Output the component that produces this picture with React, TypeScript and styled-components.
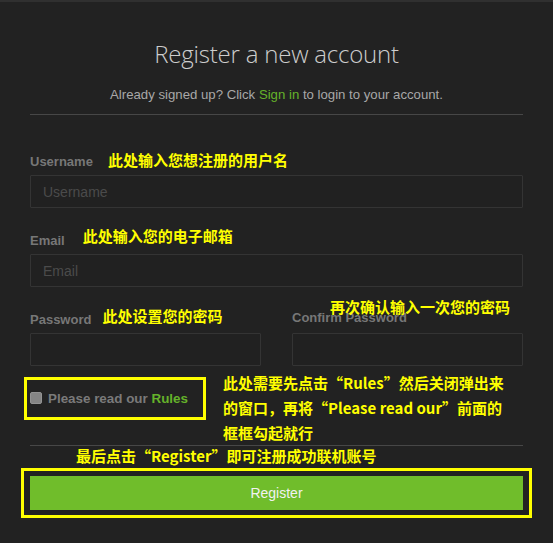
import React from "react";
import styled, { createGlobalStyle } from "styled-components";

const GlobalStyle = createGlobalStyle`
  html, body {
    margin: 0;
    padding: 0;
    background: #222;
  }
`;

export default function App() {
  return (
    <>
      <GlobalStyle />
      <Page>
        <Title>Register a new account</Title>
        <SubTitle>
          Already signed up? Click <GreenLink>Sign in</GreenLink> to login to
          your account.
        </SubTitle>
        <Divider />

        <Field>
          <LabelRow>
            <Label>Username</Label>
            <Note $indent={15}>此处输入您想注册的用户名</Note>
          </LabelRow>
          <Input placeholder="Username" />
        </Field>

        <Field>
          <LabelRow>
            <Label>Email</Label>
            <Note $indent={18} $lift={3}>此处输入您的电子邮箱</Note>
          </LabelRow>
          <Input placeholder="Email" />
        </Field>

        <PasswordGrid>
          <Field>
            <LabelRow>
              <Label>Password</Label>
              <Note $indent={11} $lift={2}>此处设置您的密码</Note>
            </LabelRow>
            <Input type="password" />
          </Field>
          <Field>
            <LabelRow>
              <Label>Confirm Password</Label>
              <FloatingNote>再次确认输入一次您的密码</FloatingNote>
            </LabelRow>
            <Input type="password" />
          </Field>
        </PasswordGrid>

        <RulesRow>
          <RulesBox>
            <FakeCheck />
            <RulesText>
              Please read our <GreenLink>Rules</GreenLink>
            </RulesText>
          </RulesBox>
          <SideNote>
            此处需要先点击“Rules”然后关闭弹出来
            <br />
            的窗口，再将“Please read our”前面的
            <br />
            框框勾起就行
          </SideNote>
        </RulesRow>

        <Divider $flat />
        <FinalNote>最后点击“Register”即可注册成功联机账号</FinalNote>

        <ButtonFrame>
          <RegisterButton>Register</RegisterButton>
        </ButtonFrame>
      </Page>
    </>
  );
}

const Page = styled.div`
  width: 553px;
  height: 543px;
  box-sizing: border-box;
  padding: 0 30px;
  background: #222;
  border-top: 2px solid #303030;
  font-family: "Liberation Sans", Arial, sans-serif;
  overflow: hidden;
`;

const Title = styled.h1`
  margin: 35px 0 0;
  font-family: "Open Sans", sans-serif;
  font-weight: 300;
  font-size: 24px;
  letter-spacing: -0.2px;
  line-height: 33px;
  color: #cdcdcd;
  text-align: center;
`;

const SubTitle = styled.p`
  margin: 17px 0 0;
  font-size: 13.2px;
  line-height: 16px;
  color: #a8a8a8;
  text-align: center;
`;

const GreenLink = styled.span`
  color: #65b22a;
`;

const Divider = styled.hr<{ $flat?: boolean }>`
  margin: ${(p) => (p.$flat ? "0" : "11px 0 0")};
  border: 0;
  height: 1px;
  background: #474747;
`;

const Field = styled.div`
  margin-top: 22px;

  &:first-of-type {
    margin-top: 36px;
  }
`;

const LabelRow = styled.div`
  position: relative;
  display: flex;
  align-items: baseline;
  height: 17px;
  margin-bottom: 7px;
`;

const Label = styled.label`
  font-size: 13px;
  line-height: 17px;
  font-weight: 700;
  color: #777;
  white-space: nowrap;
`;

const Note = styled.span<{ $indent?: number; $lift?: number }>`
  position: relative;
  top: ${(p) => -(p.$lift ?? 0)}px;
  margin-left: ${(p) => p.$indent ?? 12}px;
  color: #ffff00;
  font-family: "Noto Sans CJK SC", sans-serif;
  font-weight: 700;
  font-size: 15px;
  line-height: 17px;
  white-space: nowrap;
`;

const FloatingNote = styled(Note)`
  position: absolute;
  left: 38px;
  top: -11px;
  margin: 0;
`;

const Input = styled.input`
  display: block;
  width: 100%;
  height: 33px;
  box-sizing: border-box;
  padding: 0 12px;
  background: #212121;
  border: 1px solid #343434;
  border-radius: 1px;
  font-family: "Liberation Sans", Arial, sans-serif;
  font-size: 14px;
  color: #aaa;
  outline: none;

  &::placeholder {
    color: #4b4b4b;
  }
`;

const PasswordGrid = styled.div`
  display: grid;
  grid-template-columns: 1fr 1fr;
  column-gap: 31px;

  & > ${Field} {
    margin-top: 22px;
  }
`;

const RulesRow = styled.div`
  display: flex;
  align-items: flex-start;
  margin-top: 11px;
`;

const RulesBox = styled.div`
  display: flex;
  align-items: center;
  gap: 6px;
  width: 182px;
  height: 43px;
  box-sizing: border-box;
  margin-left: -6px;
  padding: 1px 0 0 3px;
  border: 3px solid #ffff00;
`;

const FakeCheck = styled.span`
  display: block;
  width: 12px;
  height: 12px;
  margin-top: -3px;
  box-sizing: border-box;
  border: 1px solid #939393;
  border-radius: 2px;
  background: #858585;
`;

const RulesText = styled.span`
  font-size: 13.4px;
  font-weight: 700;
  line-height: 16px;
  color: #7a7a7a;
  white-space: nowrap;
`;

const SideNote = styled.div`
  margin: -7px 0 0 17px;
  color: #ffff00;
  font-family: "Noto Sans CJK SC", sans-serif;
  font-weight: 700;
  font-size: 15px;
  line-height: 25px;
  white-space: nowrap;
`;

const FinalNote = styled.div`
  margin-top: 1px;
  padding-left: 46px;
  color: #ffff00;
  font-family: "Noto Sans CJK SC", sans-serif;
  font-weight: 700;
  font-size: 15px;
  line-height: 17px;
  white-space: nowrap;
`;

const ButtonFrame = styled.div`
  margin: 4px -9px 0;
  padding: 5px 6px;
  border: 3px solid #ffff00;
`;

const RegisterButton = styled.button`
  display: block;
  width: 100%;
  height: 34px;
  border: 0;
  background: #70bd2b;
  color: #f2f2f2;
  font-family: "Liberation Sans", Arial, sans-serif;
  font-size: 14px;
  cursor: pointer;
`;
